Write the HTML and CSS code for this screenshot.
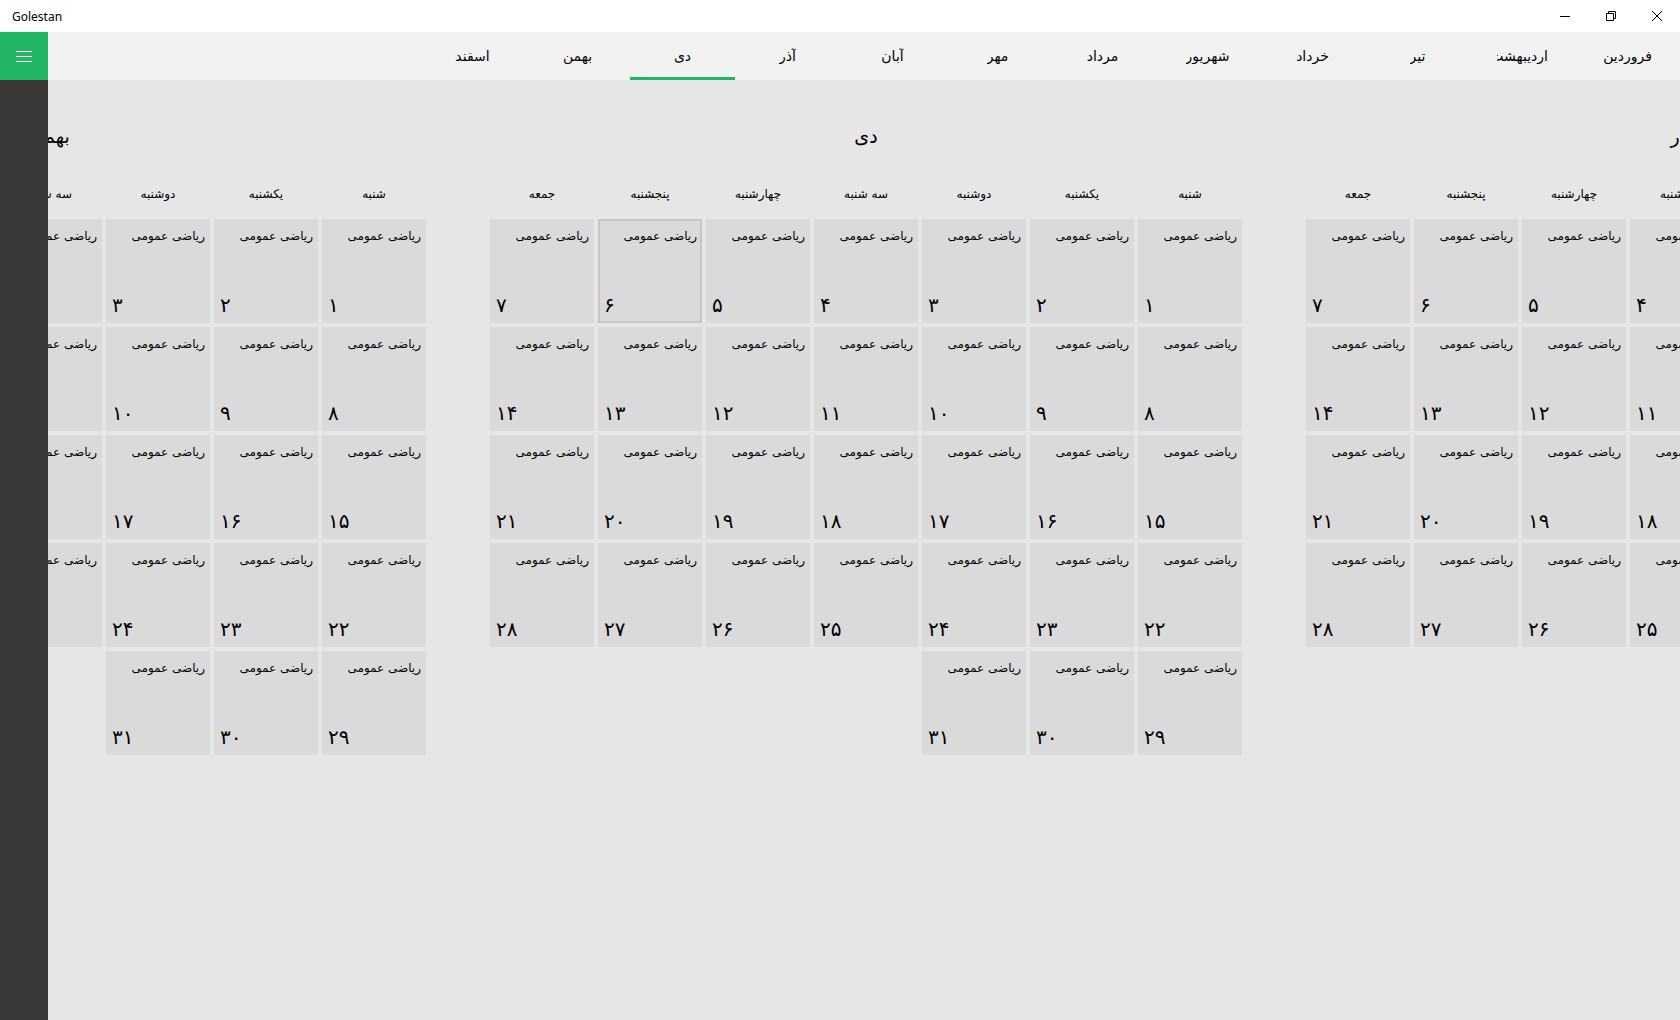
FILE: index.html
```html
<!DOCTYPE html>
<html lang="fa">
<head>
<meta charset="utf-8">
<title>Golestan</title>
<link rel="stylesheet" href="styles.css">
</head>
<body>
<div class="window">
  <header class="titlebar">
    <span class="app-title">Golestan</span>
    <div class="controls">
      <span class="ctl"><svg width="10" height="10" viewBox="0 0 10 10"><path d="M0 5.5h10" stroke="#000" stroke-width="1"/></svg></span>
      <span class="ctl"><svg width="10" height="10" viewBox="0 0 10 10"><path d="M0.5 2.5h7v7h-7z M2.5 2.5v-2h7v7h-2" fill="none" stroke="#000" stroke-width="1"/></svg></span>
      <span class="ctl"><svg width="10" height="10" viewBox="0 0 10 10"><path d="M0 0L10 10M10 0L0 10" stroke="#000" stroke-width="1"/></svg></span>
    </div>
  </header>
  <div class="frame">
    <aside class="sidebar">
      <div class="menu-btn"><svg width="16" height="12" viewBox="0 0 16 12"><path d="M0 1.5h16M0 6.5h16M0 11.5h16" stroke="#fff" stroke-width="1"/></svg></div>
      <div class="rail"></div>
    </aside>
    <main class="content">
      <nav class="pivot" dir="rtl">
        <div class="tab"><span class="tab-label">فروردین</span></div>
        <div class="tab"><span class="tab-label">اردیبهشت</span></div>
        <div class="tab"><span class="tab-label">تیر</span></div>
        <div class="tab"><span class="tab-label">خرداد</span></div>
        <div class="tab"><span class="tab-label">شهریور</span></div>
        <div class="tab"><span class="tab-label">مرداد</span></div>
        <div class="tab"><span class="tab-label">مهر</span></div>
        <div class="tab"><span class="tab-label">آبان</span></div>
        <div class="tab"><span class="tab-label">آذر</span></div>
        <div class="tab active"><span class="tab-label">دی</span></div>
        <div class="tab"><span class="tab-label">بهمن</span></div>
        <div class="tab"><span class="tab-label">اسفند</span></div>
      </nav>
      <section class="viewport">
        <div class="months" dir="rtl">
          <div class="month">
            <div class="month-title">آذر</div>
            <div class="weekdays"><span>شنبه</span><span>یکشنبه</span><span>دوشنبه</span><span>سه شنبه</span><span>چهارشنبه</span><span>پنجشنبه</span><span>جمعه</span></div>
            <div class="days">
              <div class="cell"><span class="subj">ریاضی عمومی</span><span class="num">۱</span></div>
              <div class="cell"><span class="subj">ریاضی عمومی</span><span class="num">۲</span></div>
              <div class="cell"><span class="subj">ریاضی عمومی</span><span class="num">۳</span></div>
              <div class="cell"><span class="subj">ریاضی عمومی</span><span class="num">۴</span></div>
              <div class="cell"><span class="subj">ریاضی عمومی</span><span class="num">۵</span></div>
              <div class="cell"><span class="subj">ریاضی عمومی</span><span class="num">۶</span></div>
              <div class="cell"><span class="subj">ریاضی عمومی</span><span class="num">۷</span></div>
              <div class="cell"><span class="subj">ریاضی عمومی</span><span class="num">۸</span></div>
              <div class="cell"><span class="subj">ریاضی عمومی</span><span class="num">۹</span></div>
              <div class="cell"><span class="subj">ریاضی عمومی</span><span class="num">۱۰</span></div>
              <div class="cell"><span class="subj">ریاضی عمومی</span><span class="num">۱۱</span></div>
              <div class="cell"><span class="subj">ریاضی عمومی</span><span class="num">۱۲</span></div>
              <div class="cell"><span class="subj">ریاضی عمومی</span><span class="num">۱۳</span></div>
              <div class="cell"><span class="subj">ریاضی عمومی</span><span class="num">۱۴</span></div>
              <div class="cell"><span class="subj">ریاضی عمومی</span><span class="num">۱۵</span></div>
              <div class="cell"><span class="subj">ریاضی عمومی</span><span class="num">۱۶</span></div>
              <div class="cell"><span class="subj">ریاضی عمومی</span><span class="num">۱۷</span></div>
              <div class="cell"><span class="subj">ریاضی عمومی</span><span class="num">۱۸</span></div>
              <div class="cell"><span class="subj">ریاضی عمومی</span><span class="num">۱۹</span></div>
              <div class="cell"><span class="subj">ریاضی عمومی</span><span class="num">۲۰</span></div>
              <div class="cell"><span class="subj">ریاضی عمومی</span><span class="num">۲۱</span></div>
              <div class="cell"><span class="subj">ریاضی عمومی</span><span class="num">۲۲</span></div>
              <div class="cell"><span class="subj">ریاضی عمومی</span><span class="num">۲۳</span></div>
              <div class="cell"><span class="subj">ریاضی عمومی</span><span class="num">۲۴</span></div>
              <div class="cell"><span class="subj">ریاضی عمومی</span><span class="num">۲۵</span></div>
              <div class="cell"><span class="subj">ریاضی عمومی</span><span class="num">۲۶</span></div>
              <div class="cell"><span class="subj">ریاضی عمومی</span><span class="num">۲۷</span></div>
              <div class="cell"><span class="subj">ریاضی عمومی</span><span class="num">۲۸</span></div>
              <div class="cell"><span class="subj">ریاضی عمومی</span><span class="num">۲۹</span></div>
              <div class="cell"><span class="subj">ریاضی عمومی</span><span class="num">۳۰</span></div>
            </div>
          </div>
          <div class="month">
            <div class="month-title">دی</div>
            <div class="weekdays"><span>شنبه</span><span>یکشنبه</span><span>دوشنبه</span><span>سه شنبه</span><span>چهارشنبه</span><span>پنجشنبه</span><span>جمعه</span></div>
            <div class="days">
              <div class="cell"><span class="subj">ریاضی عمومی</span><span class="num">۱</span></div>
              <div class="cell"><span class="subj">ریاضی عمومی</span><span class="num">۲</span></div>
              <div class="cell"><span class="subj">ریاضی عمومی</span><span class="num">۳</span></div>
              <div class="cell"><span class="subj">ریاضی عمومی</span><span class="num">۴</span></div>
              <div class="cell"><span class="subj">ریاضی عمومی</span><span class="num">۵</span></div>
              <div class="cell selected"><span class="subj">ریاضی عمومی</span><span class="num">۶</span></div>
              <div class="cell"><span class="subj">ریاضی عمومی</span><span class="num">۷</span></div>
              <div class="cell"><span class="subj">ریاضی عمومی</span><span class="num">۸</span></div>
              <div class="cell"><span class="subj">ریاضی عمومی</span><span class="num">۹</span></div>
              <div class="cell"><span class="subj">ریاضی عمومی</span><span class="num">۱۰</span></div>
              <div class="cell"><span class="subj">ریاضی عمومی</span><span class="num">۱۱</span></div>
              <div class="cell"><span class="subj">ریاضی عمومی</span><span class="num">۱۲</span></div>
              <div class="cell"><span class="subj">ریاضی عمومی</span><span class="num">۱۳</span></div>
              <div class="cell"><span class="subj">ریاضی عمومی</span><span class="num">۱۴</span></div>
              <div class="cell"><span class="subj">ریاضی عمومی</span><span class="num">۱۵</span></div>
              <div class="cell"><span class="subj">ریاضی عمومی</span><span class="num">۱۶</span></div>
              <div class="cell"><span class="subj">ریاضی عمومی</span><span class="num">۱۷</span></div>
              <div class="cell"><span class="subj">ریاضی عمومی</span><span class="num">۱۸</span></div>
              <div class="cell"><span class="subj">ریاضی عمومی</span><span class="num">۱۹</span></div>
              <div class="cell"><span class="subj">ریاضی عمومی</span><span class="num">۲۰</span></div>
              <div class="cell"><span class="subj">ریاضی عمومی</span><span class="num">۲۱</span></div>
              <div class="cell"><span class="subj">ریاضی عمومی</span><span class="num">۲۲</span></div>
              <div class="cell"><span class="subj">ریاضی عمومی</span><span class="num">۲۳</span></div>
              <div class="cell"><span class="subj">ریاضی عمومی</span><span class="num">۲۴</span></div>
              <div class="cell"><span class="subj">ریاضی عمومی</span><span class="num">۲۵</span></div>
              <div class="cell"><span class="subj">ریاضی عمومی</span><span class="num">۲۶</span></div>
              <div class="cell"><span class="subj">ریاضی عمومی</span><span class="num">۲۷</span></div>
              <div class="cell"><span class="subj">ریاضی عمومی</span><span class="num">۲۸</span></div>
              <div class="cell"><span class="subj">ریاضی عمومی</span><span class="num">۲۹</span></div>
              <div class="cell"><span class="subj">ریاضی عمومی</span><span class="num">۳۰</span></div>
              <div class="cell"><span class="subj">ریاضی عمومی</span><span class="num">۳۱</span></div>
            </div>
          </div>
          <div class="month">
            <div class="month-title">بهمن</div>
            <div class="weekdays"><span>شنبه</span><span>یکشنبه</span><span>دوشنبه</span><span>سه شنبه</span><span>چهارشنبه</span><span>پنجشنبه</span><span>جمعه</span></div>
            <div class="days">
              <div class="cell"><span class="subj">ریاضی عمومی</span><span class="num">۱</span></div>
              <div class="cell"><span class="subj">ریاضی عمومی</span><span class="num">۲</span></div>
              <div class="cell"><span class="subj">ریاضی عمومی</span><span class="num">۳</span></div>
              <div class="cell"><span class="subj">ریاضی عمومی</span><span class="num">۴</span></div>
              <div class="cell"><span class="subj">ریاضی عمومی</span><span class="num">۵</span></div>
              <div class="cell"><span class="subj">ریاضی عمومی</span><span class="num">۶</span></div>
              <div class="cell"><span class="subj">ریاضی عمومی</span><span class="num">۷</span></div>
              <div class="cell"><span class="subj">ریاضی عمومی</span><span class="num">۸</span></div>
              <div class="cell"><span class="subj">ریاضی عمومی</span><span class="num">۹</span></div>
              <div class="cell"><span class="subj">ریاضی عمومی</span><span class="num">۱۰</span></div>
              <div class="cell"><span class="subj">ریاضی عمومی</span><span class="num">۱۱</span></div>
              <div class="cell"><span class="subj">ریاضی عمومی</span><span class="num">۱۲</span></div>
              <div class="cell"><span class="subj">ریاضی عمومی</span><span class="num">۱۳</span></div>
              <div class="cell"><span class="subj">ریاضی عمومی</span><span class="num">۱۴</span></div>
              <div class="cell"><span class="subj">ریاضی عمومی</span><span class="num">۱۵</span></div>
              <div class="cell"><span class="subj">ریاضی عمومی</span><span class="num">۱۶</span></div>
              <div class="cell"><span class="subj">ریاضی عمومی</span><span class="num">۱۷</span></div>
              <div class="cell"><span class="subj">ریاضی عمومی</span><span class="num">۱۸</span></div>
              <div class="cell"><span class="subj">ریاضی عمومی</span><span class="num">۱۹</span></div>
              <div class="cell"><span class="subj">ریاضی عمومی</span><span class="num">۲۰</span></div>
              <div class="cell"><span class="subj">ریاضی عمومی</span><span class="num">۲۱</span></div>
              <div class="cell"><span class="subj">ریاضی عمومی</span><span class="num">۲۲</span></div>
              <div class="cell"><span class="subj">ریاضی عمومی</span><span class="num">۲۳</span></div>
              <div class="cell"><span class="subj">ریاضی عمومی</span><span class="num">۲۴</span></div>
              <div class="cell"><span class="subj">ریاضی عمومی</span><span class="num">۲۵</span></div>
              <div class="cell"><span class="subj">ریاضی عمومی</span><span class="num">۲۶</span></div>
              <div class="cell"><span class="subj">ریاضی عمومی</span><span class="num">۲۷</span></div>
              <div class="cell"><span class="subj">ریاضی عمومی</span><span class="num">۲۸</span></div>
              <div class="cell"><span class="subj">ریاضی عمومی</span><span class="num">۲۹</span></div>
              <div class="cell"><span class="subj">ریاضی عمومی</span><span class="num">۳۰</span></div>
              <div class="cell"><span class="subj">ریاضی عمومی</span><span class="num">۳۱</span></div>
            </div>
          </div>
        </div>
      </section>
    </main>
  </div>
</div>
</body>
</html>
```

FILE: styles.css
```css
* { box-sizing: border-box; }
html, body { margin: 0; padding: 0; }
body {
  font-family: "DejaVu Sans", "Noto Sans", sans-serif;
  color: #000;
  background: #e6e6e6;
}
.window {
  width: 1680px;
  height: 1020px;
  display: flex;
  flex-direction: column;
  overflow: hidden;
}
.titlebar {
  height: 32px;
  flex: 0 0 32px;
  background: #fff;
  display: flex;
  align-items: center;
  justify-content: space-between;
}
.app-title {
  font-family: "Noto Sans", "Open Sans", sans-serif;
  font-size: 12px;
  padding-left: 12px;
  color: #000;
}
.controls { display: flex; height: 100%; }
.ctl {
  width: 46px;
  height: 32px;
  display: flex;
  align-items: center;
  justify-content: center;
}
.ctl svg { display: block; }
.frame {
  flex: 1;
  display: flex;
  min-height: 0;
}
.sidebar {
  width: 48px;
  flex: 0 0 48px;
  display: flex;
  flex-direction: column;
}
.menu-btn {
  height: 48px;
  background: #22b566;
  display: flex;
  align-items: center;
  justify-content: center;
}
.menu-btn svg { display: block; }
.rail { flex: 1; background: #393836; }
.content {
  flex: 1;
  display: flex;
  flex-direction: column;
  min-width: 0;
}
.pivot {
  height: 48px;
  flex: 0 0 48px;
  background: #f2f2f2;
  display: flex;
}
.tab {
  width: 105px;
  flex: 0 0 105px;
  height: 48px;
  display: flex;
  align-items: center;
  justify-content: center;
  border-bottom: 3px solid transparent;
  padding-top: 3px;
  font-size: 14px;
}
.tab.active { border-bottom-color: #22b566; }
.tab-label {
  max-width: 51px;
  overflow: hidden;
  white-space: nowrap;
}
.viewport {
  flex: 1;
  background: #e6e6e6;
  overflow: hidden;
  padding-left: 4px;
  display: flex;
  justify-content: center;
}
.months {
  display: flex;
  gap: 64px;
  flex: 0 0 auto;
  padding-top: 42px;
}
.month {
  width: 752px;
  flex: 0 0 752px;
}
.month-title {
  height: 28px;
  line-height: 28px;
  text-align: center;
  font-size: 19px;
  margin-bottom: 34px;
}
.weekdays {
  display: grid;
  grid-template-columns: repeat(7, 104px);
  column-gap: 4px;
  height: 20px;
  line-height: 20px;
  font-size: 12px;
  text-align: center;
  margin-bottom: 15px;
  white-space: nowrap;
}
.days {
  display: grid;
  grid-template-columns: repeat(7, 104px);
  grid-auto-rows: 104px;
  gap: 4px;
}
.cell {
  background: #dadada;
  display: flex;
  flex-direction: column;
  justify-content: space-between;
  padding: 8px 5px 6px 6px;
}
.cell.selected { box-shadow: inset 0 0 0 2px #c6c6c6; }
.subj {
  align-self: flex-start;
  font-size: 12px;
  line-height: 18px;
  white-space: nowrap;
}
.num {
  align-self: flex-end;
  font-size: 20px;
  line-height: 24px;
}
```
